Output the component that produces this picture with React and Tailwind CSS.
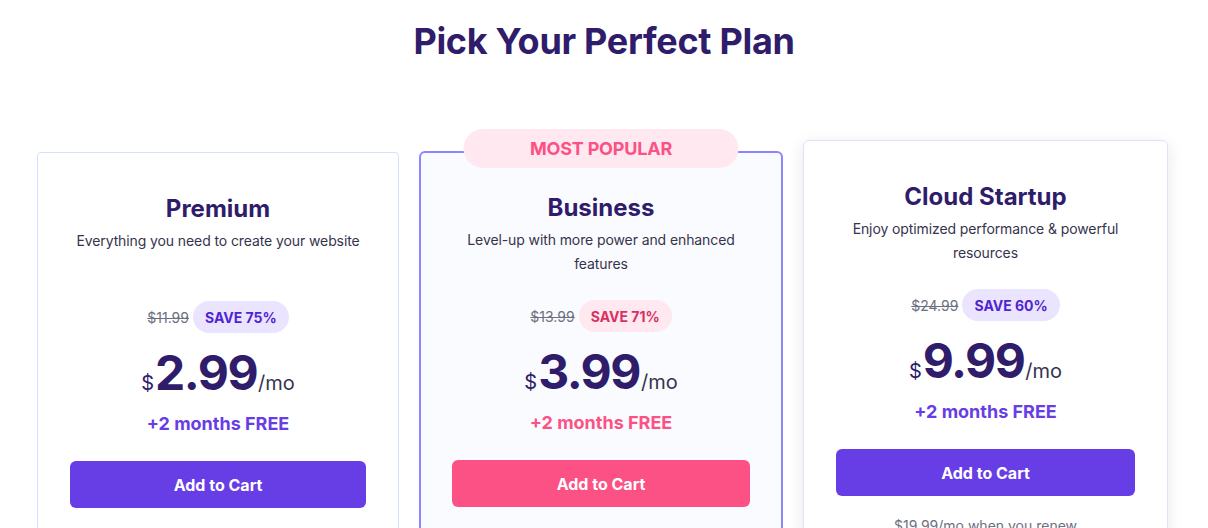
import React from "react";

const plans = [
  {
    name: "Premium",
    desc: "Everything you need to create your website",
    old: "$11.99",
    save: "SAVE 75%",
    price: "2.99",
    renew: "$11.99/mo when you renew",
    variant: "plain",
  },
  {
    name: "Business",
    desc: "Level-up with more power and enhanced features",
    old: "$13.99",
    save: "SAVE 71%",
    price: "3.99",
    renew: "$13.99/mo when you renew",
    variant: "popular",
  },
  {
    name: "Cloud Startup",
    desc: "Enjoy optimized performance & powerful resources",
    old: "$24.99",
    save: "SAVE 60%",
    price: "9.99",
    renew: "$19.99/mo when you renew",
    variant: "raised",
  },
];

function Card({ p }) {
  const popular = p.variant === "popular";
  const raised = p.variant === "raised";
  const cardCls = popular
    ? "relative mt-[11px] rounded-[6px] border-2 border-[#8c85ff] bg-[#fafbff] px-[31px] pt-[39px]"
    : raised
    ? "relative rounded-[6px] border border-[#dfe3f5] bg-white px-[32px] pt-[40px] shadow-[0_4px_16px_rgba(29,30,32,0.10)]"
    : "relative mt-[12px] rounded-[4px] border border-[#d5dfff] bg-white px-[32px] pt-[40px]";
  return (
    <div className={cardCls + " h-[420px] flex flex-col items-center text-center"}>
      {popular && (
        <div className="absolute left-1/2 top-[-24px] -translate-x-1/2 flex h-[39px] w-[275px] items-center justify-center rounded-full bg-[#ffe8ef] text-[18px] font-bold tracking-[-0.2px] text-[#fc5185]">
          MOST POPULAR
        </div>
      )}
      <h2 className="text-[24px] leading-[32px] font-bold text-[#2f1c6a]">{p.name}</h2>
      <p className="mt-[4px] h-[48px] max-w-[300px] text-[14px] leading-[24px] tracking-[-0.1px] text-[#36344d]">
        {p.desc}
      </p>
      <div className="mt-[24px] flex h-[32px] items-center gap-[4px]">
        <span className="text-[14px] text-[#6d7081] line-through">{p.old}</span>
        <span
          className={
            "flex h-[32px] items-center rounded-full px-[12px] text-[14px] font-bold " +
            (popular ? "bg-[#ffe8ef] text-[#d63163]" : "bg-[#ebe4ff] text-[#5025d1]")
          }
        >
          {p.save}
        </span>
      </div>
      <div className="mt-[12px] flex h-[56px] items-baseline justify-center text-[#2f1c6a]">
        <span className="text-[20px] mr-[1px]">$</span>
        <span className="text-[48px] leading-[56px] font-bold tracking-[-1.5px]">{p.price}</span>
        <span className="text-[20px] ml-[1px] text-[#36344d]">/mo</span>
      </div>
      <div
        className={
          "mt-[9px] text-[18px] leading-[28px] font-bold " +
          (popular ? "text-[#fc5185]" : "text-[#673de6]")
        }
      >
        +2 months FREE
      </div>
      <button
        className={
          "mt-[23px] h-[47px] w-full rounded-[6px] text-[16px] font-bold text-white " +
          (popular ? "bg-[#fc5185]" : "bg-[#673de6]")
        }
      >
        Add to Cart
      </button>
      <div className="mt-[20px] text-[14px] leading-[20px] text-[#6d7081]">{p.renew}</div>
    </div>
  );
}

export default function App() {
  return (
    <div
      className="h-[528px] w-[1208px] overflow-hidden bg-white"
      style={{ fontFamily: "Inter, 'Noto Sans', sans-serif" }}
    >
      <h1 className="pt-[21px] text-center text-[36px] leading-[40px] font-bold text-[#2f1c6a] tracking-[-0.3px]">
        Pick Your Perfect Plan
      </h1>
      <div className="ml-[37px] mt-[79px] grid w-[1131px] grid-cols-[362px_364px_365px] gap-[20px] items-start">
        {plans.map((p) => (
          <Card key={p.name} p={p} />
        ))}
      </div>
    </div>
  );
}
